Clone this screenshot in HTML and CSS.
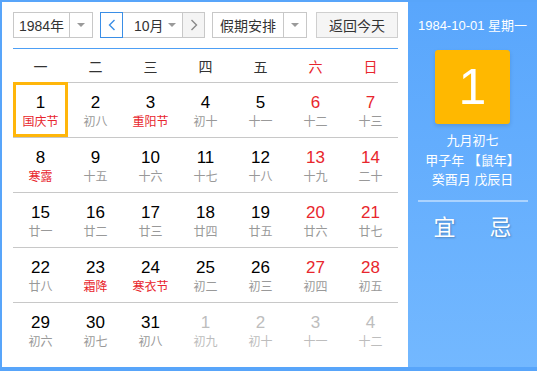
FILE: index.html
```html
<!DOCTYPE html>
<html lang="zh-CN">
<head>
  <meta charset="UTF-8" />
  <title>万年历</title>
  <link rel="stylesheet" href="styles.css">
</head>
<body>
  <div class="calendar">
    <div class="main">
      <div class="toolbar">
        <div class="select year-select">
          <span class="select-text">1984年</span>
          <span class="select-arrow"><i class="caret"></i></span>
        </div>
        <div class="month-group">
          <button class="nav-btn prev">
            <svg width="8" height="12" viewBox="0 0 8 12"><polyline points="6.5,1 1.5,6 6.5,11" fill="none" stroke="#3a8ee6" stroke-width="1.4"/></svg>
          </button>
          <div class="month-select">
            <span>10月</span>
            <i class="caret"></i>
          </div>
          <button class="nav-btn next">
            <svg width="8" height="12" viewBox="0 0 8 12"><polyline points="1.5,1 6.5,6 1.5,11" fill="none" stroke="#888" stroke-width="1.4"/></svg>
          </button>
        </div>
        <div class="select holiday-select">
          <span class="select-text">假期安排</span>
          <span class="select-arrow"><i class="caret"></i></span>
        </div>
        <button class="today-btn">返回今天</button>
      </div>

      <div class="week-head">
        <span>一</span><span>二</span><span>三</span><span>四</span><span>五</span>
        <span class="red">六</span><span class="red">日</span>
      </div>

      <div class="days">
        <div class="day active"><b>1</b><em class="fest">国庆节</em></div>
        <div class="day"><b>2</b><em>初八</em></div>
        <div class="day"><b>3</b><em class="fest">重阳节</em></div>
        <div class="day"><b>4</b><em>初十</em></div>
        <div class="day"><b>5</b><em>十一</em></div>
        <div class="day weekend"><b>6</b><em>十二</em></div>
        <div class="day weekend"><b>7</b><em>十三</em></div>

        <div class="day"><b>8</b><em class="fest">寒露</em></div>
        <div class="day"><b>9</b><em>十五</em></div>
        <div class="day"><b>10</b><em>十六</em></div>
        <div class="day"><b>11</b><em>十七</em></div>
        <div class="day"><b>12</b><em>十八</em></div>
        <div class="day weekend"><b>13</b><em>十九</em></div>
        <div class="day weekend"><b>14</b><em>二十</em></div>

        <div class="day"><b>15</b><em>廿一</em></div>
        <div class="day"><b>16</b><em>廿二</em></div>
        <div class="day"><b>17</b><em>廿三</em></div>
        <div class="day"><b>18</b><em>廿四</em></div>
        <div class="day"><b>19</b><em>廿五</em></div>
        <div class="day weekend"><b>20</b><em>廿六</em></div>
        <div class="day weekend"><b>21</b><em>廿七</em></div>

        <div class="day"><b>22</b><em>廿八</em></div>
        <div class="day"><b>23</b><em class="fest">霜降</em></div>
        <div class="day"><b>24</b><em class="fest">寒衣节</em></div>
        <div class="day"><b>25</b><em>初二</em></div>
        <div class="day"><b>26</b><em>初三</em></div>
        <div class="day weekend"><b>27</b><em>初四</em></div>
        <div class="day weekend"><b>28</b><em>初五</em></div>

        <div class="day last-row"><b>29</b><em>初六</em></div>
        <div class="day last-row"><b>30</b><em>初七</em></div>
        <div class="day last-row"><b>31</b><em>初八</em></div>
        <div class="day last-row other"><b>1</b><em>初九</em></div>
        <div class="day last-row other"><b>2</b><em>初十</em></div>
        <div class="day last-row other"><b>3</b><em>十一</em></div>
        <div class="day last-row other"><b>4</b><em>十二</em></div>
      </div>
    </div>

    <div class="side">
      <div class="side-date">1984-10-01 星期一</div>
      <div class="big-day">1</div>
      <div class="lunar">
        <p>九月初七</p>
        <p>甲子年 【鼠年】</p>
        <p>癸酉月 戊辰日</p>
      </div>
      <div class="side-line"></div>
      <div class="yi-ji">
        <span>宜</span>
        <span>忌</span>
      </div>
    </div>
  </div>
</body>
</html>
```

FILE: styles.css
```css
* {
  margin: 0;
  padding: 0;
  box-sizing: border-box;
}

body {
  font-family: "Liberation Sans", "Noto Sans CJK SC", sans-serif;
  background: #fff;
}

.calendar {
  display: flex;
  width: 537px;
  height: 371px;
  border: 2px solid #58a5fa;
  border-right: none;
  border-bottom-width: 4px;
}

/* left part */
.main {
  width: 406px;
  padding: 10px 10px 0 11px;
  background: #fff;
}

.toolbar {
  display: flex;
  align-items: center;
  height: 37px;
  padding-bottom: 11px;
  border-bottom: 1px solid #4d9ff5;
}

.select {
  display: flex;
  height: 26px;
  border: 1px solid #c8c8c8;
  background: #fff;
  color: #333;
  font-size: 14px;
}

.select-text {
  display: flex;
  align-items: center;
  justify-content: center;
  border-right: 1px solid #c8c8c8;
}

.select-arrow {
  display: flex;
  align-items: center;
  justify-content: center;
  flex: 1;
}

.caret {
  display: inline-block;
  width: 0;
  height: 0;
  border-left: 4px solid transparent;
  border-right: 4px solid transparent;
  border-top: 4px solid #9a9a9a;
}

.year-select {
  width: 80px;
}

.year-select .select-text {
  width: 56px;
}

.month-group {
  display: flex;
  height: 26px;
  margin-left: 7px;
}

.nav-btn {
  width: 23px;
  height: 26px;
  border: 1px solid #c8c8c8;
  background: #f4f4f4;
  display: flex;
  align-items: center;
  justify-content: center;
}

.nav-btn.prev {
  border-color: #3a8ee6;
  background: #fff;
}

.month-select {
  width: 59px;
  display: flex;
  align-items: center;
  justify-content: space-between;
  padding: 0 6px 0 11px;
  border-top: 1px solid #c8c8c8;
  border-bottom: 1px solid #c8c8c8;
  font-size: 14px;
  color: #333;
}

.holiday-select {
  width: 95px;
  margin-left: 7px;
}

.holiday-select .select-text {
  width: 71px;
}

.today-btn {
  width: 82px;
  height: 26px;
  margin-left: 9px;
  border: 1px solid #cfcfcf;
  background: #f5f5f5;
  color: #333;
  font-size: 14px;
  font-family: inherit;
}

.week-head {
  display: grid;
  grid-template-columns: repeat(7, 55px);
  height: 34px;
  padding-top: 3px;
  border-bottom: 1px solid #c8c8c8;
  font-size: 14px;
  line-height: 30px;
  color: #333;
  text-align: center;
}

.red {
  color: #e8262d;
}

.days {
  display: grid;
  grid-template-columns: repeat(7, 55px);
}

.day {
  height: 55px;
  padding-top: 10px;
  border-bottom: 1px solid #c8c8c8;
  text-align: center;
}

.day.last-row {
  border-bottom: none;
}

.day b {
  display: block;
  font-weight: normal;
  font-size: 17px;
  line-height: 20px;
  color: #000;
}

.day em {
  display: block;
  font-style: normal;
  font-size: 12px;
  line-height: 19px;
  color: #999;
}

.day.weekend b {
  color: #e8262d;
}

.day em.fest {
  color: #e8262d;
}

.day.other b,
.day.other em {
  color: #bdbdbd;
}

.day.active {
  box-shadow: inset 0 0 0 3px #ffb60a;
  margin-top: -1px;
  height: 56px;
  padding-top: 11px;
}

/* right part */
.side {
  flex: 1;
  background: linear-gradient(180deg, #59a6fc 0%, #73b8ff 100%);
  color: #fff;
  text-align: center;
  padding-top: 14px;
}

.side-date {
  font-size: 13px;
  line-height: 20px;
}

.big-day {
  width: 75px;
  height: 74px;
  margin: 14px auto 0;
  background: #ffb800;
  border-radius: 3px;
  box-shadow: 0 2px 4px rgba(0, 0, 0, 0.12);
  font-size: 50px;
  line-height: 74px;
}

.lunar {
  margin-top: 7px;
  font-size: 13px;
  line-height: 19.5px;
}

.side-line {
  width: 110px;
  height: 2px;
  margin: 10px auto 0;
  background: rgba(255, 255, 255, 0.45);
}

.yi-ji {
  display: flex;
  justify-content: center;
  gap: 34px;
  margin-top: 11px;
  font-size: 22px;
  line-height: 30px;
  text-shadow: 1px 1px 2px rgba(0, 0, 0, 0.25);
}
```
